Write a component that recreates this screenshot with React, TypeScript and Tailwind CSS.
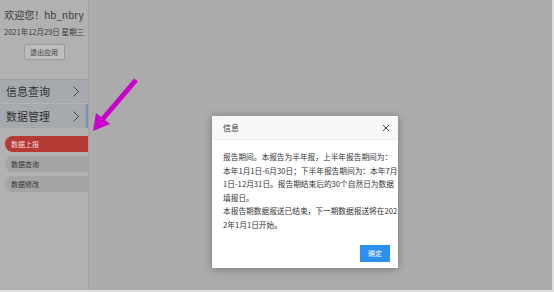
import React from "react";

const font = { fontFamily: '"Microsoft YaHei", "Noto Sans CJK SC", "Liberation Sans", sans-serif' };

function Sidebar() {
  return (
    <div className="w-[89px] shrink-0 h-full bg-[#b1b1b1] border-r border-[#a2a2a2] flex flex-col">
      <div className="flex flex-col items-center pt-[9px]">
        <div className="text-[10px] leading-[12px] text-[#3a3a3a]">欢迎您！hb_nbry</div>
        <div className="text-[7.5px] leading-[10px] text-[#3a3a3a] mt-[6px]">2021年12月29日 星期三</div>
        <div className="mt-[7px] w-[41px] h-[16px] border border-[#9a9a9a] rounded-[2px] bg-[#bdbdbd] text-[7px] text-[#444] flex items-center justify-center">
          退出应用
        </div>
      </div>
      <div className="mt-[19px] border-t border-[#9d9d9d]">
        <div className="h-[24px] bg-[#a6aaaf] flex items-center justify-between pl-[6px] pr-[9px] border-b border-[#b4b4b4]">
          <span className="text-[11px] text-[#333]">信息查询</span>
          <Chevron />
        </div>
        <div className="h-[24px] bg-[#a6aaaf] flex items-center justify-between pl-[6px] border-r-[2px] border-[#7d93ac]">
          <span className="text-[11px] text-[#333]">数据管理</span>
          <span className="pr-[7px]"><Chevron /></span>
        </div>
      </div>
      <div className="flex flex-col gap-[4px] pl-[5px] mt-[8px]">
        <div className="h-[16px] rounded-l-full bg-[#b53a33] text-[7px] text-[#f1dcdc] flex items-center pl-[6px]">数据上报</div>
        <div className="h-[16px] rounded-l-full bg-[#a4a4a4] text-[7px] text-[#333] flex items-center pl-[6px]">数据查询</div>
        <div className="h-[16px] rounded-l-full bg-[#a4a4a4] text-[7px] text-[#333] flex items-center pl-[6px]">数据修改</div>
      </div>
    </div>
  );
}

function Chevron() {
  return (
    <svg width="6" height="11" viewBox="0 0 6 11">
      <path d="M0.5 0.5 L5.5 5.5 L0.5 10.5" fill="none" stroke="#444" strokeWidth="1" />
    </svg>
  );
}

function Modal() {
  const lines = [
    "报告期间。本报告为半年报，上半年报告期间为：",
    "本年1月1日-6月30日；下半年报告期间为：本年7月",
    "1日-12月31日。报告期结束后的30个自然日为数据",
    "填报日。",
    "本报告期数据报送已结束，下一期数据报送将在202",
    "2年1月1日开始。",
  ];
  return (
    <div className="w-[186px] h-[152px] bg-white shadow-[0_1px_8px_rgba(0,0,0,0.3)] flex flex-col">
      <div className="h-[24px] bg-[#f8f8f8] border-b border-[#eee] flex items-center justify-between pl-[11px] pr-[8px]">
        <span className="text-[8px] text-[#333]">信息</span>
        <svg width="8" height="8" viewBox="0 0 8 8">
          <path d="M1 1 L7 7 M7 1 L1 7" stroke="#444" strokeWidth="1" />
        </svg>
      </div>
      <div className="px-[11px] pt-[10px] text-[7.7px] leading-[13.5px] text-[#333]">
        {lines.map((l) => (
          <div key={l} className="whitespace-nowrap">{l}</div>
        ))}
      </div>
      <div className="flex justify-end px-[8px] mt-auto pb-[6px]">
        <div className="w-[30px] h-[17px] bg-[#2d8ff0] text-white text-[7px] flex items-center justify-center">确定</div>
      </div>
    </div>
  );
}

export default function App() {
  return (
    <div style={font} className="relative w-[554px] h-[292px] bg-[#ababab] flex overflow-hidden border-r-2 border-b-2 border-[#dedede]">
      <Sidebar />
      <div className="flex-1 flex pt-[116px] pl-[123px]">
        <Modal />
      </div>
      <svg className="absolute left-0 top-0" width="554" height="292" viewBox="0 0 554 292">
        <line x1="136" y1="80" x2="101" y2="121" stroke="#cc00cc" strokeWidth="5" />
        <polygon points="93,131 96,113 110,124" fill="#cc00cc" />
      </svg>
    </div>
  );
}
